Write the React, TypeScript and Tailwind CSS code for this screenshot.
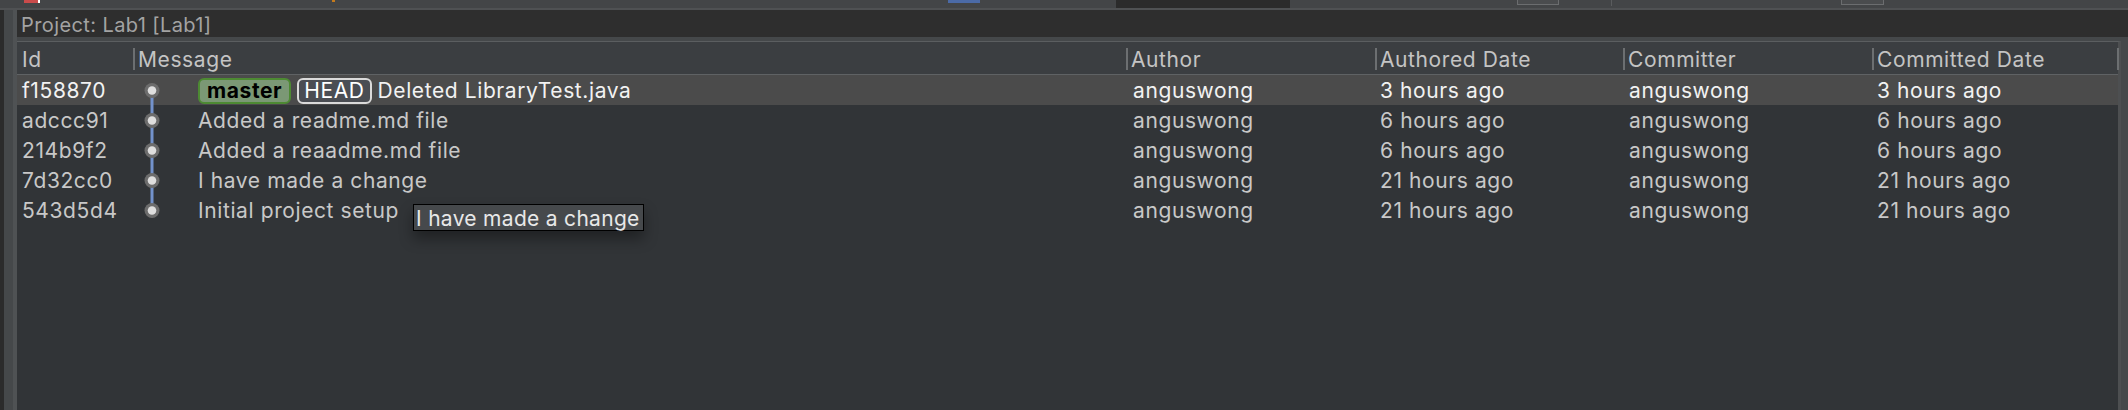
import React from "react";

type Commit = {
  id: string;
  message: string;
  author: string;
  authored: string;
  committer: string;
  committed: string;
  refs?: boolean;
};

const commits: Commit[] = [
  { id: "f158870", message: "Deleted LibraryTest.java", author: "anguswong", authored: "3 hours ago", committer: "anguswong", committed: "3 hours ago", refs: true },
  { id: "adccc91", message: "Added a readme.md file", author: "anguswong", authored: "6 hours ago", committer: "anguswong", committed: "6 hours ago" },
  { id: "214b9f2", message: "Added a reaadme.md file", author: "anguswong", authored: "6 hours ago", committer: "anguswong", committed: "6 hours ago" },
  { id: "7d32cc0", message: "I have made a change", author: "anguswong", authored: "21 hours ago", committer: "anguswong", committed: "21 hours ago" },
  { id: "543d5d4", message: "Initial project setup", author: "anguswong", authored: "21 hours ago", committer: "anguswong", committed: "21 hours ago" },
];

const cols = "grid grid-cols-[116px_993px_249px_248px_249px_247px]";

function GraphNode({ first, last }: { first: boolean; last: boolean }) {
  return (
    <svg width="38" height="30" viewBox="0 0 38 30" className="shrink-0">
      {!first && <line x1="19" y1="0" x2="19" y2="15" stroke="#7392cc" strokeWidth="3" />}
      {!last && <line x1="19" y1="15" x2="19" y2="30" stroke="#7392cc" strokeWidth="3" />}
      <circle cx="19" cy="14.5" r="7.5" fill="#6c6c6c" />
      <circle cx="19" cy="14.5" r="4.3" fill="#dedede" />
    </svg>
  );
}

function HeaderCell({ label, sep }: { label: string; sep?: boolean }) {
  return (
    <div className="flex h-full items-center">
      {sep && <div className="h-[22px] w-[2px] bg-[#6c6f71]" />}
      <span className={`pt-[2px] ${sep ? "pl-[3px]" : "pl-[5px]"}`}>{label}</span>
    </div>
  );
}

export default function App() {
  return (
    <div
      className="relative flex h-[410px] w-[2128px] flex-col overflow-hidden bg-[#45484a] text-[21px] tracking-[0.6px]"
      style={{ fontFamily: "Inter, 'Liberation Sans', sans-serif" }}
    >
      {/* top toolbar strip */}
      <div className="flex h-[8px] shrink-0 items-start bg-[#434547]">
        <div className="ml-[24px] h-[3px] w-[14px] bg-[#c94b4b]" />
        <div className="h-[3px] w-[2px] bg-white" />
        <div className="ml-[292px] h-[2px] w-[3px] bg-[#c47a1c]" />
        <div className="ml-[613px] h-[3px] w-[32px] bg-[#4b6aa6]" />
        <div className="ml-[136px] h-[10px] w-[174px] bg-[#2b2b2b]" />
        <div className="ml-[227px] h-[5px] w-[42px] border-x border-b border-[#6b6d6f] bg-[#4a4c4e]" />
        <div className="ml-[52px] h-[6px] w-px bg-[#5a5c5e]" />
        <div className="ml-[229px] h-[5px] w-[43px] border-x border-b border-[#6b6d6f] bg-[#4a4c4e]" />
      </div>
      <div className="h-[2px] shrink-0 bg-[#4f5153]" />

      <div className="flex min-h-0 flex-1">
        {/* left gutter */}
        <div className="flex w-[17px] shrink-0">
          <div className="w-[4px] bg-[#2b2b2b]" />
          <div className="w-[9px] bg-[#45484a]" />
          <div className="w-[4px] bg-[#4f5254]" />
        </div>

        <div className="flex min-w-0 flex-1 flex-col">
          {/* project bar */}
          <div className="flex h-[27px] shrink-0 items-center bg-[#2e2e2e] pl-[4px] pt-[2px] text-[20px] tracking-[0.4px] text-[#a3a3a3]">
            Project: Lab1 [Lab1]
          </div>
          <div className="h-[4px] shrink-0 bg-[#45484a]" />

          {/* table */}
          <div className="flex min-h-0 w-[2104px] flex-1 flex-col border-t border-r-[3px] border-t-[#5b5e60] border-r-[#4d4f51] bg-[#313437]">
            <div className={`${cols} h-[33px] shrink-0 border-b border-[#5f6264] bg-[#3b3e41] text-[#c4c4c4]`}>
              <HeaderCell label="Id" />
              <HeaderCell label="Message" sep />
              <HeaderCell label="Author" sep />
              <HeaderCell label="Authored Date" sep />
              <HeaderCell label="Committer" sep />
              <div className="flex h-full items-center justify-between">
                <div className="flex items-center">
                  <div className="h-[22px] w-[2px] bg-[#6c6f71]" />
                  <span className="pl-[3px] pt-[2px]">Committed Date</span>
                </div>
                <div className="h-[22px] w-[2px] bg-[#6c6f71]" />
              </div>
            </div>

            {commits.map((c, i) => (
              <div
                key={c.id}
                className={`${cols} h-[30px] shrink-0 items-center ${
                  i === 0 ? "bg-[#4b4b4b] text-[#f2f2f2]" : "text-[#c8c8c8]"
                }`}
              >
                <span className="pl-[5px]">{c.id}</span>
                <div className="flex h-full items-center">
                  <GraphNode first={i === 0} last={i === commits.length - 1} />
                  <div className="ml-[27px] flex items-center gap-[6px]">
                    {c.refs && (
                      <>
                        <span className="flex h-[26px] items-center rounded-[6px] border-2 border-[#4d8a33] bg-[#7b9875] px-[7px] font-bold text-black">
                          master
                        </span>
                        <span className="flex h-[26px] items-center rounded-[6px] border-2 border-[#dadada] bg-[#4a4d53] px-[5px] text-white">
                          HEAD
                        </span>
                      </>
                    )}
                    <span>{c.message}</span>
                  </div>
                </div>
                <span className="pl-[7px]">{c.author}</span>
                <span className="pl-[5px]">{c.authored}</span>
                <span className="pl-[6px]">{c.committer}</span>
                <span className="pl-[5px]">{c.committed}</span>
              </div>
            ))}
          </div>
        </div>
      </div>

      {/* hover tooltip */}
      <div className="absolute left-[413px] top-[204px] flex h-[27px] w-[231px] items-center whitespace-nowrap border border-black bg-[#46494c] pl-[2px] pt-[2px] tracking-[0.3px] text-[#e8e8e8] shadow-[0_8px_14px_rgba(0,0,0,0.35)]">
        I have made a change
      </div>
    </div>
  );
}
